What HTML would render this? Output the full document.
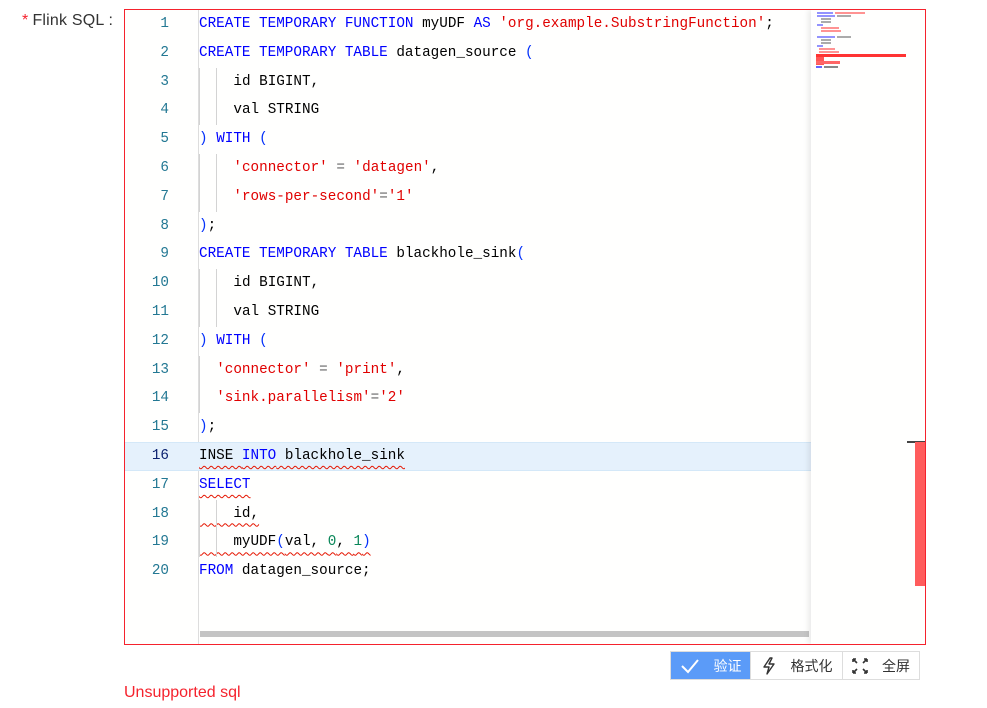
<!DOCTYPE html>
<html><head><meta charset="utf-8">
<style>
*{margin:0;padding:0;box-sizing:border-box}
body{width:987px;height:708px;background:#fff;font-family:"Liberation Sans","Noto Sans CJK SC",sans-serif;position:relative;overflow:hidden}
.label{position:absolute;left:22px;top:12px;font-size:16px;color:#333;letter-spacing:.2px}
.label b{color:#f5222d;font-weight:normal;margin-right:4px}
.box{position:absolute;left:124px;top:9px;width:802px;height:636px;border:1px solid #f5222d;background:#fffffe;overflow:hidden}
.gutter{position:absolute;left:0;top:0;width:74px;height:100%;border-right:1px solid #ddd}
.code{position:absolute;left:0;top:0;width:686px;height:100%;font-family:"Liberation Mono",monospace;font-size:14.3px}
.ln{position:absolute;height:28.8px;line-height:28.8px;white-space:pre}
.num{left:0;width:44px;text-align:right;color:#237893}
.txt{left:74px;color:#000}
.act{position:absolute;left:0;width:686px;height:28.8px;background:#e5f1fc;border-top:1px solid #d4e8f8;border-bottom:1px solid #d4e8f8}
.k{color:#0000ff}.s{color:#e00000}.p{color:#0431fa}.o{color:#666}.n{color:#098658}
.g{display:inline-block;width:17.2px;height:28.8px;vertical-align:top;border-left:1px solid #d3d3d3}
.sq{text-decoration:underline wavy #e51400;text-decoration-thickness:1px;text-underline-offset:6px}
.sqb{background:url() ;position:relative}
.mini{position:absolute;left:686px;top:0;width:114px;height:100%;background:#fffffe;box-shadow:-3px 0 5px rgba(0,0,0,.08)}
.hs{position:absolute;left:75px;top:621px;width:609px;height:6px;background:#c4c4c4}
.btns{position:absolute;left:670px;top:651px;height:29px;display:flex;border:1px solid #ddd}
.btn{height:27px;display:flex;align-items:center;justify-content:center;font-size:14px;color:#333;gap:14px}
.b1{width:79px;background:#5b9bf8;color:#fff}
.b2{width:92px;border-left:1px solid #ddd}
.b3{width:77px;border-left:1px solid #ddd}
.err{position:absolute;left:124px;top:684px;font-size:16px;color:#f5222d}
</style></head><body>
<div class="label"><b>*</b>Flink SQL :</div>
<div class="box">
 <div class="gutter"></div>
 <div class="code">
  <div class="act" style="top:432px"></div>
  <div class="ln num" style="top:0">1</div><div class="ln txt" style="top:0"><span class="k">CREATE TEMPORARY FUNCTION</span> myUDF <span class="k">AS</span> <span class="s">'org.example.SubstringFunction'</span>;</div>
  <div class="ln num" style="top:28.8px">2</div><div class="ln txt" style="top:28.8px"><span class="k">CREATE TEMPORARY TABLE</span> datagen_source <span class="p">(</span></div>
  <div class="ln num" style="top:57.6px">3</div><div class="ln txt" style="top:57.6px"><span class="g"></span><span class="g"></span>id BIGINT,</div>
  <div class="ln num" style="top:86.4px">4</div><div class="ln txt" style="top:86.4px"><span class="g"></span><span class="g"></span>val STRING</div>
  <div class="ln num" style="top:115.2px">5</div><div class="ln txt" style="top:115.2px"><span class="p">)</span> <span class="k">WITH</span> <span class="p">(</span></div>
  <div class="ln num" style="top:144px">6</div><div class="ln txt" style="top:144px"><span class="g"></span><span class="g"></span><span class="s">'connector'</span> <span class="o">=</span> <span class="s">'datagen'</span>,</div>
  <div class="ln num" style="top:172.8px">7</div><div class="ln txt" style="top:172.8px"><span class="g"></span><span class="g"></span><span class="s">'rows-per-second'</span><span class="o">=</span><span class="s">'1'</span></div>
  <div class="ln num" style="top:201.6px">8</div><div class="ln txt" style="top:201.6px"><span class="p">)</span>;</div>
  <div class="ln num" style="top:230.4px">9</div><div class="ln txt" style="top:230.4px"><span class="k">CREATE TEMPORARY TABLE</span> blackhole_sink<span class="p">(</span></div>
  <div class="ln num" style="top:259.2px">10</div><div class="ln txt" style="top:259.2px"><span class="g"></span><span class="g"></span>id BIGINT,</div>
  <div class="ln num" style="top:288px">11</div><div class="ln txt" style="top:288px"><span class="g"></span><span class="g"></span>val STRING</div>
  <div class="ln num" style="top:316.8px">12</div><div class="ln txt" style="top:316.8px"><span class="p">)</span> <span class="k">WITH</span> <span class="p">(</span></div>
  <div class="ln num" style="top:345.6px">13</div><div class="ln txt" style="top:345.6px"><span class="g"></span><span class="s">'connector'</span> <span class="o">=</span> <span class="s">'print'</span>,</div>
  <div class="ln num" style="top:374.4px">14</div><div class="ln txt" style="top:374.4px"><span class="g"></span><span class="s">'sink.parallelism'</span><span class="o">=</span><span class="s">'2'</span></div>
  <div class="ln num" style="top:403.2px">15</div><div class="ln txt" style="top:403.2px"><span class="p">)</span>;</div>
  <div class="ln num" style="top:432px;color:#0b216f">16</div><div class="ln txt" style="top:432px"><span class="sq">INSE <span class="k">INTO</span> blackhole_sink</span></div>
  <div class="ln num" style="top:460.8px">17</div><div class="ln txt" style="top:460.8px"><span class="sq"><span class="k">SELECT</span></span></div>
  <div class="ln num" style="top:489.6px">18</div><div class="ln txt" style="top:489.6px"><span class="g" style="position:absolute;left:0"></span><span class="g" style="position:absolute;left:17.2px"></span><span class="sq">    id,</span></div>
  <div class="ln num" style="top:518.4px">19</div><div class="ln txt" style="top:518.4px"><span class="g" style="position:absolute;left:0"></span><span class="g" style="position:absolute;left:17.2px"></span><span class="sq">    myUDF<span class="p">(</span>val, <span class="n">0</span>, <span class="n">1</span><span class="p">)</span></span></div>
  <div class="ln num" style="top:547.2px">20</div><div class="ln txt" style="top:547.2px"><span class="k">FROM</span> datagen_source;</div>
  <div class="hs"></div>
 </div>
 <div class="mini">
  <svg width="114" height="636" style="position:absolute;left:0;top:0">
   <g opacity=".7">
   <rect x="6" y="2" width="16" height="2" fill="#66f"/><rect x="24" y="2" width="30" height="2" fill="#f66"/>
   <rect x="6" y="5" width="18" height="2" fill="#66f"/><rect x="26" y="5" width="14" height="2" fill="#888"/>
   <rect x="10" y="8" width="10" height="2" fill="#888"/><rect x="10" y="11" width="10" height="2" fill="#888"/>
   <rect x="6" y="14" width="6" height="2" fill="#66f"/>
   <rect x="10" y="17" width="18" height="2" fill="#f66"/><rect x="10" y="20" width="20" height="2" fill="#f66"/>
   <rect x="6" y="26" width="18" height="2" fill="#66f"/><rect x="26" y="26" width="14" height="2" fill="#888"/>
   <rect x="10" y="29" width="10" height="2" fill="#888"/><rect x="10" y="32" width="10" height="2" fill="#888"/>
   <rect x="6" y="35" width="6" height="2" fill="#66f"/>
   <rect x="8" y="38" width="16" height="2" fill="#f66"/><rect x="8" y="41" width="20" height="2" fill="#f66"/>
   </g>
   <rect x="5" y="44" width="90" height="3" fill="#f33"/>
   <rect x="5" y="47" width="8" height="8" fill="#f55"/>
   <rect x="5" y="51" width="24" height="3" fill="#f66"/>
   <rect x="5" y="56" width="6" height="2" fill="#66f"/><rect x="13" y="56" width="14" height="2" fill="#888"/>
   <rect x="96" y="431" width="18" height="2" fill="#444"/>
   <rect x="104" y="432" width="10" height="144" fill="#ff5c5c"/>
  </svg>
 </div>
</div>
<div class="btns">
 <div class="btn b1"><svg width="20" height="16" viewBox="0 0 20 16"><path d="M2 8 L8 14 L18 2" fill="none" stroke="#fff" stroke-width="2"/></svg><span>验证</span></div>
 <div class="btn b2"><svg width="16" height="18" viewBox="0 0 16 18"><path d="M9 1 L3 10 L8 10 L6 17 L13 7 L8 7 L11 1 Z" fill="none" stroke="#333" stroke-width="1.4" stroke-linejoin="round"/></svg><span>格式化</span></div>
 <div class="btn b3"><svg width="16" height="16" viewBox="0 0 16 16" fill="none" stroke="#333" stroke-width="1.6"><path d="M1 1 L5 5 M1 1 L1 4 M1 1 L4 1 M15 1 L11 5 M15 1 L15 4 M15 1 L12 1 M1 15 L5 11 M1 15 L1 12 M1 15 L4 15 M15 15 L11 11 M15 15 L15 12 M15 15 L12 15"/></svg><span>全屏</span></div>
</div>
<div class="err">Unsupported sql</div>
</body></html>
